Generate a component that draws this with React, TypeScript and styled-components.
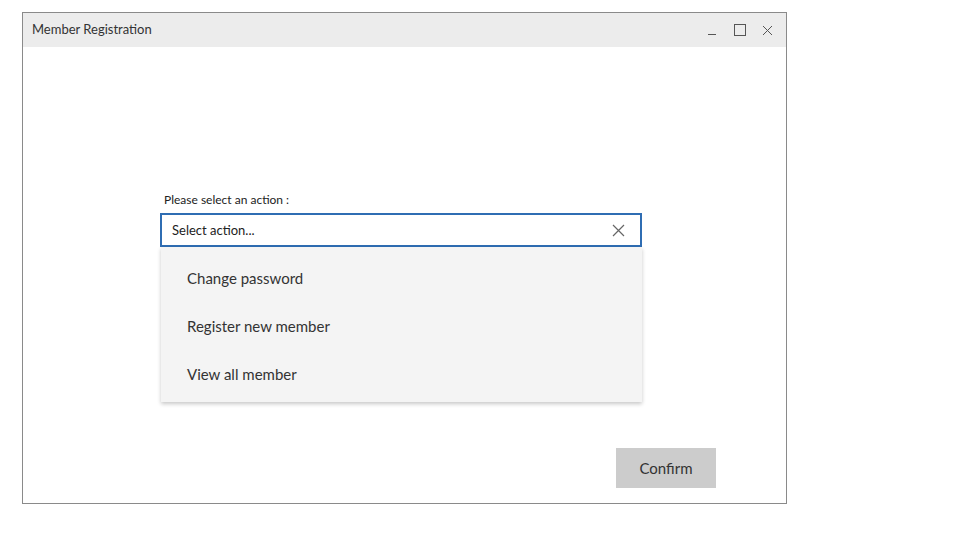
import React from "react";
import styled, { createGlobalStyle } from "styled-components";

const Global = createGlobalStyle`
  html, body { margin: 0; padding: 0; background: #ffffff; }
  body { font-family: "Lato", "Liberation Sans", sans-serif; color: #222; }
`;

const Page = styled.div`
  width: 960px;
  height: 540px;
  padding: 12px 0 0 22px;
  box-sizing: border-box;
`;

const Window = styled.div`
  width: 765px;
  height: 492px;
  border: 1px solid #8a8a8a;
  box-sizing: border-box;
  display: flex;
  flex-direction: column;
  background: #fff;
`;

const TitleBar = styled.div`
  height: 34px;
  box-sizing: border-box;
  background: #ececec;
  display: flex;
  align-items: center;
  padding: 0 10px 2px 9px;
  flex-shrink: 0;
`;

const Title = styled.div`
  flex: 1;
  font-size: 13px;
  color: #333;
`;

const Controls = styled.div`
  display: flex;
  align-items: center;
  gap: 11px;
  margin-top: 2px;
`;

const ControlBtn = styled.div`
  width: 17px;
  height: 17px;
  display: flex;
  align-items: center;
  justify-content: center;
  color: #555;
`;

const Body = styled.div`
  flex: 1;
  display: flex;
  flex-direction: column;
  padding: 145px 70px 15px 137px;
`;

const Label = styled.div`
  font-size: 12px;
  color: #222;
  margin-left: 4px;
  margin-bottom: 6px;
`;

const SelectWrap = styled.div`
  position: relative;
  width: 482px;
`;

const SelectBox = styled.div`
  height: 34px;
  border: 2px solid #2f6db3;
  box-sizing: border-box;
  display: flex;
  align-items: center;
  padding: 0 15px 0 10px;
`;

const SelectText = styled.div`
  flex: 1;
  font-size: 13px;
  color: #222;
`;

const Menu = styled.div`
  position: absolute;
  top: 34px;
  left: 1px;
  right: 0;
  background: #f4f4f4;
  box-shadow: 0 2px 4px rgba(0, 0, 0, 0.22);
  padding: 7px 0 4px;
`;

const MenuItem = styled.div`
  height: 48px;
  display: flex;
  align-items: center;
  padding-left: 26px;
  font-size: 15px;
  color: #333;
`;

const Footer = styled.div`
  margin-top: auto;
  display: flex;
  justify-content: flex-end;
`;

const ConfirmButton = styled.button`
  width: 100px;
  height: 40px;
  border: none;
  background: #cccccc;
  font-family: inherit;
  font-size: 15px;
  color: #333;
  padding: 0;
`;

export default function App() {
  return (
    <>
      <Global />
      <Page>
        <Window>
          <TitleBar>
            <Title>Member Registration</Title>
            <Controls>
              <ControlBtn>
                <svg width="12" height="12" viewBox="0 0 12 12">
                  <line x1="2" y1="10.5" x2="10" y2="10.5" stroke="#555" strokeWidth="1" />
                </svg>
              </ControlBtn>
              <ControlBtn>
                <svg width="12" height="12" viewBox="0 0 12 12">
                  <rect x="0.5" y="0.5" width="11" height="11" fill="none" stroke="#555" strokeWidth="1" />
                </svg>
              </ControlBtn>
              <ControlBtn>
                <svg width="11" height="11" viewBox="0 0 11 11">
                  <path d="M1 1 L10 10 M10 1 L1 10" stroke="#555" strokeWidth="1" />
                </svg>
              </ControlBtn>
            </Controls>
          </TitleBar>
          <Body>
            <Label>Please select an action :</Label>
            <SelectWrap>
              <SelectBox>
                <SelectText>Select action...</SelectText>
                <svg width="13" height="13" viewBox="0 0 13 13">
                  <path d="M1 1 L12 12 M12 1 L1 12" stroke="#666" strokeWidth="1.2" />
                </svg>
              </SelectBox>
              <Menu>
                <MenuItem>Change password</MenuItem>
                <MenuItem>Register new member</MenuItem>
                <MenuItem>View all member</MenuItem>
              </Menu>
            </SelectWrap>
            <Footer>
              <ConfirmButton>Confirm</ConfirmButton>
            </Footer>
          </Body>
        </Window>
      </Page>
    </>
  );
}
